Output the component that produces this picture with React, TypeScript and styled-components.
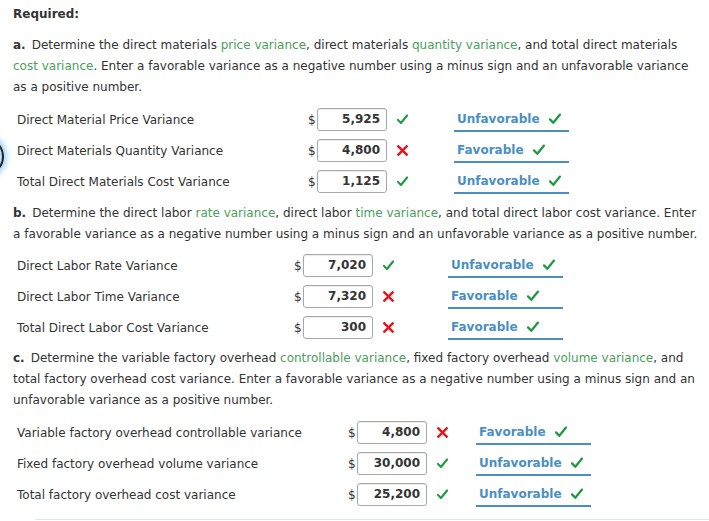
import React from "react";
import styled, { createGlobalStyle } from "styled-components";

const Global = createGlobalStyle`
  html, body { margin: 0; padding: 0; background: #fff; }
  body { font-family: "DejaVu Sans", Verdana, sans-serif; font-size: 12px; color: #333; }
`;

const Page = styled.div`
  position: relative;
  width: 709px;
  height: 521px;
  overflow: hidden;
  box-sizing: border-box;
  padding: 4px 8px 0 13px;
`;

const Heading = styled.div`
  font-weight: bold;
  line-height: 21px;
  margin-bottom: 10px;
`;

const Para = styled.p`
  margin: 0;
  line-height: 21px;
`;

const Letter = styled.b`
  margin-right: 6px;
`;

const Term = styled.span`
  color: #4c9e5b;
`;

const Table = styled.div<{ $label: number; $gap: number; $mt: number; $mb: number }>`
  display: grid;
  grid-template-columns: ${(p) => p.$label}px 9px 70px 21px ${(p) => p.$gap}px auto 1fr;
  grid-auto-rows: 31px;
  align-items: center;
  padding-left: 4px;
  margin: ${(p) => p.$mt}px 0 ${(p) => p.$mb}px;
`;

const Label = styled.div`
  grid-column: 1;
`;

const Dollar = styled.div`
  grid-column: 2;
`;

const Input = styled.div`
  grid-column: 3;
  height: 23px;
  box-sizing: border-box;
  border: 1px solid #a8a8a8;
  border-radius: 3px;
  box-shadow: inset 0 1px 1px rgba(0, 0, 0, 0.08);
  text-align: right;
  padding-right: 6px;
  font-weight: bold;
  font-size: 12px;
  line-height: 21px;
  color: #333;
`;

const Mark = styled.div`
  grid-column: 4;
  display: flex;
  align-items: center;
  justify-content: flex-end;
`;

const Select = styled.div`
  grid-column: 6;
  display: flex;
  align-items: center;
  gap: 9px;
  height: 24px;
  box-sizing: border-box;
  padding: 0 8px 0 3px;
  border-bottom: 2px solid #4a8fc3;
  color: #4a8fc3;
  font-weight: bold;
  font-size: 12px;
`;

const Ring = styled.div`
  position: absolute;
  left: -35px;
  top: 137px;
  width: 35px;
  height: 35px;
  border-radius: 50%;
  border: 2.5px solid #222;
  box-shadow: 0 0 5px 3px rgba(90, 180, 255, 0.55), inset 0 0 5px 3px rgba(90, 180, 255, 0.55);
`;

const BottomRule = styled.div`
  position: absolute;
  left: 35px;
  right: 0;
  bottom: 1px;
  height: 1px;
  background: #dde6ec;
`;

const Check = ({ size = 11 }: { size?: number }) => (
  <svg width={size} height={size} viewBox="0 0 12 12">
    <path d="M1 6.4 L4.3 9.8 L11 1.6" fill="none" stroke="#1f9a40" strokeWidth="2.3" strokeLinecap="round" strokeLinejoin="round" />
  </svg>
);

const Cross = () => (
  <svg width="11" height="11" viewBox="0 0 12 12">
    <path d="M1.5 1.5 L10.5 10.5 M10.5 1.5 L1.5 10.5" fill="none" stroke="#e8131b" strokeWidth="2.6" strokeLinecap="square" />
  </svg>
);

type Row = { label: string; value: string; ok: boolean; choice: string };

const Rows = ({ rows }: { rows: Row[] }) => (
  <>
    {rows.map((r) => (
      <React.Fragment key={r.label}>
        <Label>{r.label}</Label>
        <Dollar>$</Dollar>
        <Input>{r.value}</Input>
        <Mark>{r.ok ? <Check /> : <Cross />}</Mark>
        <Select>
          {r.choice}
          <Check size={12} />
        </Select>
      </React.Fragment>
    ))}
  </>
);

const rowsA: Row[] = [
  { label: "Direct Material Price Variance", value: "5,925", ok: true, choice: "Unfavorable" },
  { label: "Direct Materials Quantity Variance", value: "4,800", ok: false, choice: "Favorable" },
  { label: "Total Direct Materials Cost Variance", value: "1,125", ok: true, choice: "Unfavorable" },
];
const rowsB: Row[] = [
  { label: "Direct Labor Rate Variance", value: "7,020", ok: true, choice: "Unfavorable" },
  { label: "Direct Labor Time Variance", value: "7,320", ok: false, choice: "Favorable" },
  { label: "Total Direct Labor Cost Variance", value: "300", ok: false, choice: "Favorable" },
];
const rowsC: Row[] = [
  { label: "Variable factory overhead controllable variance", value: "4,800", ok: false, choice: "Favorable" },
  { label: "Fixed factory overhead volume variance", value: "30,000", ok: true, choice: "Unfavorable" },
  { label: "Total factory overhead cost variance", value: "25,200", ok: true, choice: "Unfavorable" },
];

export default function App() {
  return (
    <>
      <Global />
      <Page>
        <Ring />
        <Heading>Required:</Heading>
        <Para>
          <Letter>a.</Letter>Determine the direct materials <Term>price variance</Term>, direct materials{" "}
          <Term>quantity variance</Term>, and total direct materials <Term>cost variance</Term>. Enter a favorable
          variance as a negative number using a minus sign and an unfavorable variance as a positive number.
        </Para>
        <Table $label={291} $gap={46} $mt={6} $mb={6}>
          <Rows rows={rowsA} />
        </Table>
        <Para>
          <Letter>b.</Letter>Determine the direct labor <Term>rate variance</Term>, direct labor{" "}
          <Term>time variance</Term>, and total direct labor cost variance. Enter a favorable variance as a negative
          number using a minus sign and an unfavorable variance as a positive number.
        </Para>
        <Table $label={277} $gap={54} $mt={5} $mb={5}>
          <Rows rows={rowsB} />
        </Table>
        <Para>
          <Letter>c.</Letter>Determine the variable factory overhead <Term>controllable variance</Term>, fixed factory
          overhead <Term>volume variance</Term>, and total factory overhead cost variance. Enter a favorable variance
          as a negative number using a minus sign and an unfavorable variance as a positive number.
        </Para>
        <Table $label={331} $gap={28} $mt={6} $mb={0}>
          <Rows rows={rowsC} />
        </Table>
        <BottomRule />
      </Page>
    </>
  );
}
